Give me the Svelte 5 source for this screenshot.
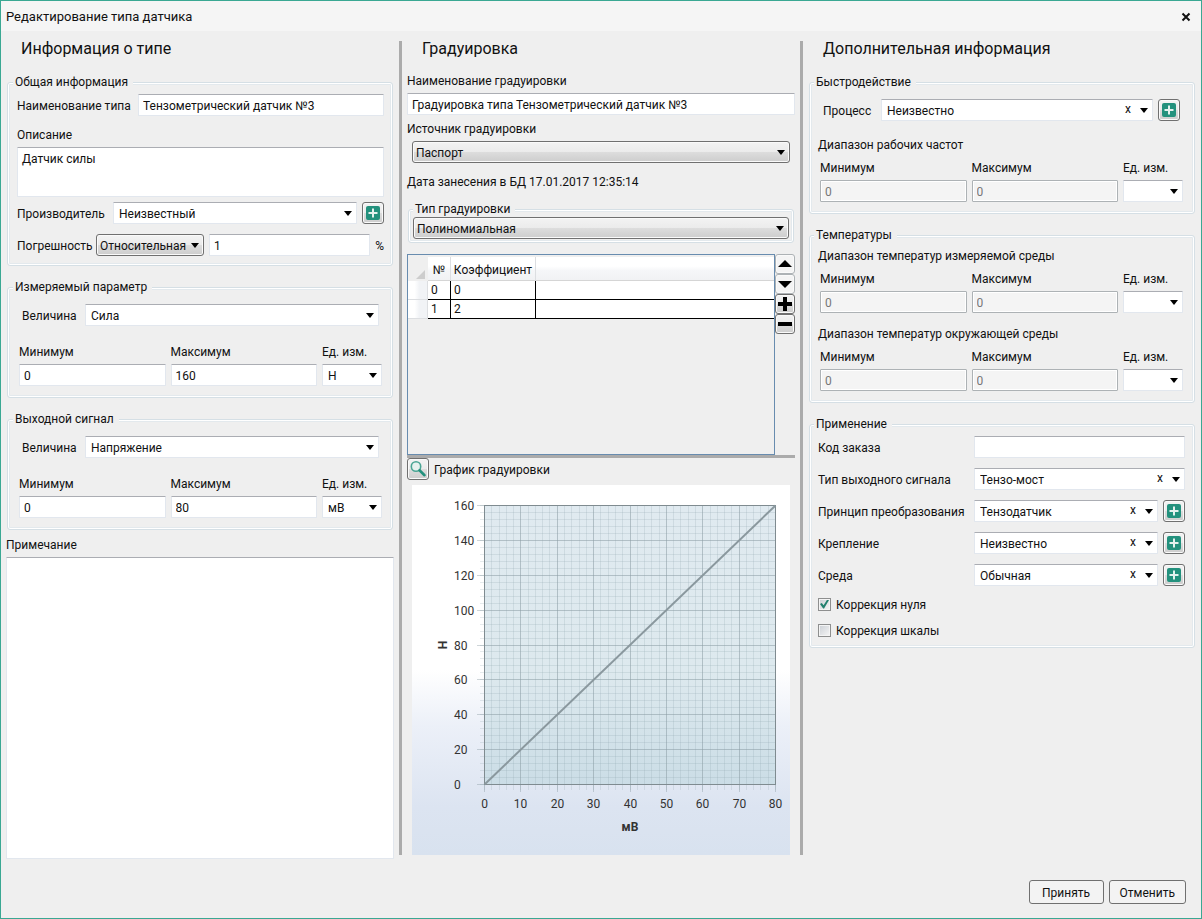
<script lang="ts">
  type Field = { id: string; label: string; value: string; addable: boolean };

  let typeName = $state('Тензометрический датчик №3');
  let description = $state('Датчик силы');
  let tolerance = $state('1');
  let note = $state('');
  let calibrationName = $state('Градуировка типа Тензометрический датчик №3');
  let orderCode = $state('');
  let zeroCorrection = $state(true);
  let scaleCorrection = $state(false);

  const usage: Field[] = [
    { id: 'output-type', label: 'Тип выходного сигнала', value: 'Тензо-мост', addable: false },
    { id: 'principle', label: 'Принцип преобразования', value: 'Тензодатчик', addable: true },
    { id: 'mounting', label: 'Крепление', value: 'Неизвестно', addable: true },
    { id: 'medium', label: 'Среда', value: 'Обычная', addable: true },
  ];

  const coefficients = [
    { n: 0, value: 0 },
    { n: 1, value: 2 },
  ];

  // Plot area inside the 378x370 chart canvas.
  const plot = { left: 72, top: 20, width: 291, height: 279 };
  const xMax = 80;
  const yMax = 160;

  const steps = (max: number, step: number) =>
    Array.from({ length: max / step + 1 }, (_, i) => i * step);
  const px = (v: number) => Math.round(plot.left + (v / xMax) * plot.width) + 0.5;
  const py = (v: number) => Math.round(plot.top + plot.height - (v / yMax) * plot.height) + 0.5;
  const bottom = plot.top + plot.height;
  const right = plot.left + plot.width;
</script>

{#snippet combo(id: string, value: string, look: string, clearable: boolean = false, label: string = '')}
  <span class="combo {look}">
    <select {id} aria-label={label || undefined}>
      <option>{value}</option>
    </select>
    {#if clearable}
      <button class="clear" type="button" aria-label="Очистить">x</button>
    {/if}
  </span>
{/snippet}

{#snippet addButton()}
  <button class="icon-button" type="button" aria-label="Добавить">
    <svg width="16" height="16" viewBox="0 0 16 16" aria-hidden="true">
      <rect x="1" y="1" width="14" height="14" rx="2" fill="#23917d" />
      <path d="M8 3.5v9M3.5 8h9" stroke="#e4f1ee" stroke-width="2" />
    </svg>
  </button>
{/snippet}

{#snippet range(id: string, min: string, max: string, unit: string, disabled: boolean = false)}
  <div class="range">
    <label for="{id}-min">Минимум</label>
    <label for="{id}-max">Максимум</label>
    <label for="{id}-unit">Ед. изм.</label>
    <input id="{id}-min" type="text" value={min} {disabled} />
    <input id="{id}-max" type="text" value={max} {disabled} />
    {@render combo(`${id}-unit`, unit, 'flat')}
  </div>
{/snippet}

<div class="window">
  <header class="titlebar">
    <span>Редактирование типа датчика</span>
    <button class="close" type="button" aria-label="Закрыть">
      <svg width="10" height="10" viewBox="0 0 10 10" aria-hidden="true">
        <path d="M1.5 1.5l7 7M8.5 1.5l-7 7" stroke="#111" stroke-width="2" />
      </svg>
    </button>
  </header>

  <main class="columns">
    <section class="column type">
      <h2>Информация о типе</h2>

      <fieldset>
        <legend>Общая информация</legend>
        <div class="row">
          <label class="label-name" for="type-name">Наименование типа</label>
          <input id="type-name" type="text" bind:value={typeName} />
        </div>
        <label class="above description-label" for="description">Описание</label>
        <textarea id="description" class="description" bind:value={description}></textarea>
        <div class="row">
          <label class="label-maker" for="maker">Производитель</label>
          {@render combo('maker', 'Неизвестный', 'flat')}
          {@render addButton()}
        </div>
        <div class="row spaced">
          <label class="label-tolerance" for="tolerance-kind">Погрешность</label>
          <div class="tolerance-kind">{@render combo('tolerance-kind', 'Относительная', 'raised')}</div>
          <input type="text" aria-label="Значение погрешности" bind:value={tolerance} />
          <span class="percent">%</span>
        </div>
      </fieldset>

      <fieldset class="signal">
        <legend>Измеряемый параметр</legend>
        <div class="row inset">
          <label class="label-quantity" for="measured">Величина</label>
          {@render combo('measured', 'Сила', 'flat')}
        </div>
        {@render range('measured-range', '0', '160', 'Н')}
      </fieldset>

      <fieldset class="signal">
        <legend>Выходной сигнал</legend>
        <div class="row inset">
          <label class="label-quantity" for="output">Величина</label>
          {@render combo('output', 'Напряжение', 'flat')}
        </div>
        {@render range('output-range', '0', '80', 'мВ')}
      </fieldset>

      <div class="notes">
        <label class="above" for="note">Примечание</label>
        <textarea id="note" class="note" bind:value={note}></textarea>
      </div>
    </section>

    <div class="splitter"></div>

    <section class="column calibration">
      <h2>Градуировка</h2>

      <label class="above" for="calibration-name">Наименование градуировки</label>
      <input id="calibration-name" type="text" bind:value={calibrationName} />
      <label class="above source-label" for="source">Источник градуировки</label>
      <div class="source">{@render combo('source', 'Паспорт', 'raised')}</div>
      <p class="date">Дата занесения в БД&nbsp;<time datetime="2017-01-17T12:35:14">17.01.2017 12:35:14</time></p>

      <fieldset class="kind">
        <legend>Тип градуировки</legend>
        {@render combo('kind', 'Полиномиальная', 'raised', false, 'Тип градуировки')}
      </fieldset>

      <div class="grid-area">
        <div class="datagrid">
          <table>
            <thead>
              <tr>
                <td class="corner"><svg width="9" height="9" viewBox="0 0 9 9" aria-hidden="true"><path d="M9 0v9H0z" fill="#cdcdcd" /></svg></td>
                <th class="col-n">№</th>
                <th class="col-value">Коэффициент</th>
                <th class="filler"></th>
              </tr>
            </thead>
            <tbody>
              {#each coefficients as row (row.n)}
                <tr>
                  <td class="row-head"></td>
                  <td>{row.n}</td>
                  <td>{row.value}</td>
                  <td class="filler"></td>
                </tr>
              {/each}
            </tbody>
          </table>
        </div>
        <div class="tools">
          <button type="button" class="muted" aria-label="Вверх">
            <svg width="14" height="14" viewBox="0 0 14 14"><path d="M0 10l7-7 7 7z" /></svg>
          </button>
          <button type="button" class="muted" aria-label="Вниз">
            <svg width="14" height="14" viewBox="0 0 14 14"><path d="M0 4l7 7 7-7z" /></svg>
          </button>
          <button type="button" aria-label="Добавить строку">
            <svg width="14" height="14" viewBox="0 0 14 14"><path d="M5 0h4v5h5v4H9v5H5V9H0V5h5z" /></svg>
          </button>
          <button type="button" aria-label="Удалить строку">
            <svg width="14" height="14" viewBox="0 0 14 14"><path d="M0 5h14v4H0z" /></svg>
          </button>
        </div>
      </div>

      <div class="chart-head">
        <button class="icon-button" type="button" aria-label="Увеличить график">
          <svg width="18" height="18" viewBox="0 0 18 18" fill="none" aria-hidden="true">
            <circle cx="7" cy="6.5" r="4.7" fill="#e6f1ee" stroke="#4aa594" stroke-width="1.6" />
            <path d="M10.5 10.3l5 4.9" stroke="#23917d" stroke-width="2.6" stroke-linecap="round" />
          </svg>
        </button>
        <span>График градуировки</span>
      </div>

      <svg class="chart" viewBox="0 0 378 370" role="img" aria-label="График градуировки">
        <defs>
          <linearGradient id="canvas-fill" x1="0" y1="0" x2="0" y2="1">
            <stop offset="0" stop-color="#ffffff" />
            <stop offset="0.5" stop-color="#ffffff" />
            <stop offset="0.65" stop-color="#ecf0f8" />
            <stop offset="0.87" stop-color="#dce4f1" />
            <stop offset="1" stop-color="#d8e2ef" />
          </linearGradient>
          <linearGradient id="plot-fill" x1="0" y1="0" x2="0" y2="1">
            <stop offset="0" stop-color="#e0eaf0" />
            <stop offset="0.6" stop-color="#dde9ee" />
            <stop offset="1" stop-color="#cbdde6" />
          </linearGradient>
        </defs>
        <rect width="378" height="370" fill="url(#canvas-fill)" />
        <rect x={plot.left} y={plot.top} width={plot.width} height={plot.height} fill="url(#plot-fill)" />

        <g class="minor">
          {#each steps(xMax, 2) as v (v)}
            <line x1={px(v)} x2={px(v)} y1={plot.top} y2={bottom + 6} />
          {/each}
          {#each steps(yMax, 4) as v (v)}
            <line x1={plot.left - 4} x2={right} y1={py(v)} y2={py(v)} />
          {/each}
        </g>
        <g class="major">
          {#each steps(xMax, 10) as v (v)}
            <line x1={px(v)} x2={px(v)} y1={plot.top} y2={bottom + 8} />
          {/each}
          {#each steps(yMax, 20) as v (v)}
            <line x1={plot.left - 7} x2={right} y1={py(v)} y2={py(v)} />
          {/each}
        </g>
        <rect class="frame" x={plot.left + 0.5} y={plot.top + 0.5} width={plot.width} height={plot.height} />
        <line class="series" x1={px(0)} y1={py(0)} x2={px(xMax)} y2={py(yMax)} />

        {#each steps(xMax, 10) as v (v)}
          <text x={px(v)} y="323" text-anchor="middle">{v}</text>
        {/each}
        {#each steps(yMax, 20) as v (v)}
          <text x="42" y={py(v) + 4}>{v}</text>
        {/each}
        <text class="axis" x="218" y="346" text-anchor="middle">мВ</text>
        <text class="axis" transform="translate(35 160) rotate(-90)" text-anchor="middle">Н</text>
      </svg>
    </section>

    <div class="splitter"></div>

    <section class="column extra">
      <h2>Дополнительная информация</h2>

      <fieldset class="speed">
        <legend>Быстродействие</legend>
        <div class="row inset">
          <label class="label-process" for="process">Процесс</label>
          {@render combo('process', 'Неизвестно', 'flat', true)}
          {@render addButton()}
        </div>
        <p class="caption speed-caption">Диапазон рабочих частот</p>
        {@render range('frequency', '0', '0', '', true)}
      </fieldset>

      <fieldset class="temperature">
        <legend>Температуры</legend>
        <p class="caption">Диапазон температур измеряемой среды</p>
        {@render range('measured-temp', '0', '0', '', true)}
        <p class="caption ambient-caption">Диапазон температур окружающей среды</p>
        {@render range('ambient-temp', '0', '0', '', true)}
      </fieldset>

      <fieldset class="usage">
        <legend>Применение</legend>
        <div class="row">
          <label class="label-usage" for="order-code">Код заказа</label>
          <input id="order-code" type="text" bind:value={orderCode} />
        </div>
        {#each usage as field (field.id)}
          <div class="row">
            <label class="label-usage" for={field.id}>{field.label}</label>
            {@render combo(field.id, field.value, 'flat', true)}
            {#if field.addable}
              {@render addButton()}
            {/if}
          </div>
        {/each}
        <label class="check"><input type="checkbox" bind:checked={zeroCorrection} /><span>Коррекция нуля</span></label>
        <label class="check"><input type="checkbox" bind:checked={scaleCorrection} /><span>Коррекция шкалы</span></label>
      </fieldset>
    </section>
  </main>

  <footer>
    <button class="action" type="button">Принять</button>
    <button class="action" type="button">Отменить</button>
  </footer>
</div>

<style>
  :global(body) {
    margin: 0;
  }
  .window {
    --raised: linear-gradient(#f3f3f3, #ebebeb 50%, #dddddd 50%, #cdcdcd);
    display: flex;
    flex-direction: column;
    min-height: 100vh;
    box-sizing: border-box;
    border: 1px solid #3aa893;
    background: #efefef;
    color: #111;
    font: 12px/16px Roboto, 'Open Sans', sans-serif;
  }
  .window :global(*) {
    box-sizing: border-box;
  }
  .titlebar {
    display: flex;
    align-items: center;
    justify-content: space-between;
    height: 30px;
    padding: 2px 10px 0 5px;
    background: #f5f5f5;
    font-size: 13px;
  }
  .close {
    display: flex;
    padding: 0;
    border: none;
    background: none;
  }
  .columns {
    flex: 1;
    display: grid;
    grid-template-columns: minmax(0, 1fr) 3px minmax(0, 1fr) 3px minmax(0, 1fr);
  }
  .column {
    display: flex;
    flex-direction: column;
    padding: 6px 6px 0;
  }
  .splitter {
    margin: 10px 0 4px;
    background: #ababab;
  }
  h2 {
    margin: 0 0 14px;
    padding-left: 14px;
    font-size: 16px;
    font-weight: 400;
    line-height: 23px;
  }

  fieldset {
    min-width: 0;
    margin: 0 0 13px;
    padding: 4px 8px 9px 9px;
    border: 1px solid #d5dfe5;
    border-radius: 3px;
    box-shadow:
      inset 0 0 0 1px #fff,
      inset 0 0 0 2px #e3e9ed;
  }
  .extra fieldset {
    padding-right: 9px;
    padding-left: 8px;
  }
  legend {
    margin-left: -4px;
    padding: 0 5px 0 2px;
    background: #efefef;
  }
  .signal,
  .speed {
    padding-top: 9px;
    padding-bottom: 11px;
  }
  .temperature {
    padding-bottom: 11px;
  }
  .row {
    display: flex;
    align-items: center;
    gap: 5px;
  }
  .row label {
    flex: none;
    padding-top: 2px;
    white-space: nowrap;
  }
  .spaced {
    margin-top: 10px;
  }
  .inset {
    padding: 0 5px;
  }
  .label-name {
    width: 116px;
  }
  .label-maker {
    width: 91px;
  }
  .label-tolerance {
    width: 74px;
  }
  .label-quantity {
    width: 58px;
  }
  .label-process {
    width: 53px;
  }
  .label-usage {
    width: 151px;
  }
  .tolerance-kind {
    display: flex;
    flex: none;
    width: 108px;
  }
  .percent {
    width: 11px;
    padding-top: 2px;
  }

  input[type='text'],
  textarea {
    display: block;
    width: 100%;
    min-width: 0;
    height: 22px;
    margin: 0;
    padding: 2px 4px 0;
    border: 1px solid #e2e7ee;
    border-top-color: #abadb3;
    border-radius: 1px;
    background: #fff;
    color: #111;
    font: inherit;
  }
  input[type='text']:disabled {
    border-color: #adb2b5;
    box-shadow: inset 0 0 0 1px #fff;
    background: #f4f4f4;
    color: #777;
  }
  textarea {
    padding: 3px 4px;
    resize: none;
  }
  .above {
    display: block;
    margin-bottom: 4px;
  }
  .description-label {
    margin-top: 11px;
  }
  .description {
    height: 50px;
    margin-bottom: 5px;
  }
  .notes {
    flex: 1;
    display: flex;
    flex-direction: column;
    margin: -6px -1px 0;
  }
  .note {
    flex: 1;
    min-height: 120px;
  }

  .combo {
    position: relative;
    display: flex;
    flex: 1;
    min-width: 0;
  }
  .combo::after {
    content: '';
    position: absolute;
    top: 9px;
    right: 5px;
    border: 4px solid transparent;
    border-top: 5px solid #000;
    border-bottom: none;
    pointer-events: none;
  }
  select {
    appearance: none;
    width: 100%;
    height: 22px;
    margin: 0;
    padding: 2px 18px 0 5px;
    border: 1px solid #e2e7ee;
    border-top-color: #abadb3;
    border-radius: 1px;
    background: #fff;
    color: #111;
    font: inherit;
  }
  .raised select {
    padding: 2px 16px 0 3px;
    border-color: #707070;
    border-radius: 3px;
    background: var(--raised);
    box-shadow: inset 0 0 0 1px #fafafa;
  }
  .clear {
    position: absolute;
    top: 2px;
    right: 18px;
    width: 14px;
    padding: 0;
    border: none;
    background: none;
    color: #111;
    font: inherit;
  }
  .icon-button {
    display: flex;
    flex: none;
    align-items: center;
    justify-content: center;
    width: 22px;
    height: 22px;
    padding: 0;
    border: 1px solid #707070;
    border-radius: 3px;
    background: var(--raised);
    box-shadow: inset 0 0 0 1px #fafafa;
  }

  .range {
    display: grid;
    grid-template-columns: 1fr 1fr 60px;
    gap: 4px 5px;
    padding: 0 2px;
  }
  .signal .range {
    margin-top: 18px;
  }
  .caption {
    margin: 0 0 7px;
  }
  .speed-caption {
    margin-top: 16px;
  }
  .temperature .caption:first-of-type {
    padding-top: 1px;
  }
  .ambient-caption {
    margin-top: 13px;
  }

  .calibration {
    padding: 6px 5px 4px;
  }
  .calibration h2 {
    margin-bottom: 13px;
    padding-left: 15px;
  }
  .source-label {
    margin-top: 6px;
  }
  .source {
    display: flex;
    padding: 0 5px;
  }
  .date {
    margin: 11px 0;
  }
  .kind {
    display: flex;
    margin: 0 1px 11px;
    padding: 0 4px 3px;
  }
  .kind legend {
    margin-left: 0;
  }
  .grid-area {
    display: grid;
    grid-template-columns: 1fr 20px;
    height: 204px;
    border-bottom: 3px solid #ababab;
  }
  .datagrid {
    padding-top: 2px;
    border: 1px solid #688caf;
  }
  table {
    width: 100%;
    border-collapse: separate;
    border-spacing: 0;
    table-layout: fixed;
  }
  th {
    height: 24px;
    padding: 2px 0 0;
    border-right: 1px solid #dcdee1;
    border-bottom: 1px solid #d5d5d5;
    background: linear-gradient(#fff 40%, #f5f6f8 60%, #f1f2f4);
    font-weight: 400;
  }
  td {
    height: 19px;
    padding: 0 3px;
    border-right: 1px solid #000;
    border-bottom: 1px solid #000;
    background: #fff;
    line-height: 18px;
  }
  .filler {
    border-right: none;
  }
  .corner {
    width: 20px;
    border: none;
    background: none;
    text-align: right;
    vertical-align: bottom;
  }
  .corner svg {
    display: block;
    margin: 0 0 2px auto;
  }
  .col-n {
    width: 23px;
  }
  .col-value {
    width: 85px;
  }
  .row-head {
    border-color: #dcdee1;
    background: linear-gradient(90deg, #fff 35%, #f1f3f6 60%);
  }
  .tools {
    display: flex;
    flex-direction: column;
  }
  .tools button {
    display: flex;
    align-items: center;
    justify-content: center;
    width: 20px;
    height: 20px;
    padding: 0;
    border: 1px solid #707070;
    border-radius: 3px;
    background: var(--raised);
    box-shadow: inset 0 0 0 1px #fafafa;
  }
  .tools .muted {
    border-color: #adb2b5;
    background: #f4f4f4;
  }
  .chart-head {
    display: flex;
    align-items: center;
    gap: 5px;
    margin-bottom: 5px;
  }
  .chart-head span {
    padding-top: 2px;
  }
  .chart {
    display: block;
    margin: 0 5px;
  }
  .chart text {
    fill: #333;
    font-size: 12px;
  }
  .chart .axis {
    font-weight: 700;
  }
  .minor line {
    stroke: #8ea3ad;
    stroke-opacity: 0.22;
  }
  .major line {
    stroke: #8b9ba3;
    stroke-opacity: 0.42;
  }
  .frame {
    fill: none;
    stroke: #7f8b90;
  }
  .series {
    stroke: #8a989e;
    stroke-width: 2;
  }

  .usage .row {
    margin-bottom: 10px;
  }
  .check {
    display: flex;
    align-items: center;
    gap: 5px;
    height: 16px;
    margin-bottom: 10px;
  }
  .check:last-child {
    margin-bottom: 0;
  }
  .check span {
    padding-top: 2px;
  }
  .check input {
    appearance: none;
    display: grid;
    place-items: center;
    width: 13px;
    height: 13px;
    margin: 0;
    border: 1px solid #8e8f8f;
    background: linear-gradient(135deg, #cbcfd5, #f6f6f6);
    box-shadow: inset 0 0 0 1px #f4f4f4;
  }
  .check input:checked::before {
    content: '';
    width: 9px;
    height: 9px;
    background: #23806f;
    clip-path: polygon(0 50%, 20% 40%, 40% 65%, 80% 0, 100% 5%, 45% 100%, 35% 100%);
  }

  footer {
    display: flex;
    justify-content: flex-end;
    gap: 5px;
    padding: 21px 15px 14px;
  }
  .action {
    min-width: 75px;
    height: 24px;
    padding: 1px 10px 0;
    border: 1px solid #707070;
    border-radius: 3px;
    background: #f3f3f3;
    color: #111;
    font: inherit;
  }
</style>
